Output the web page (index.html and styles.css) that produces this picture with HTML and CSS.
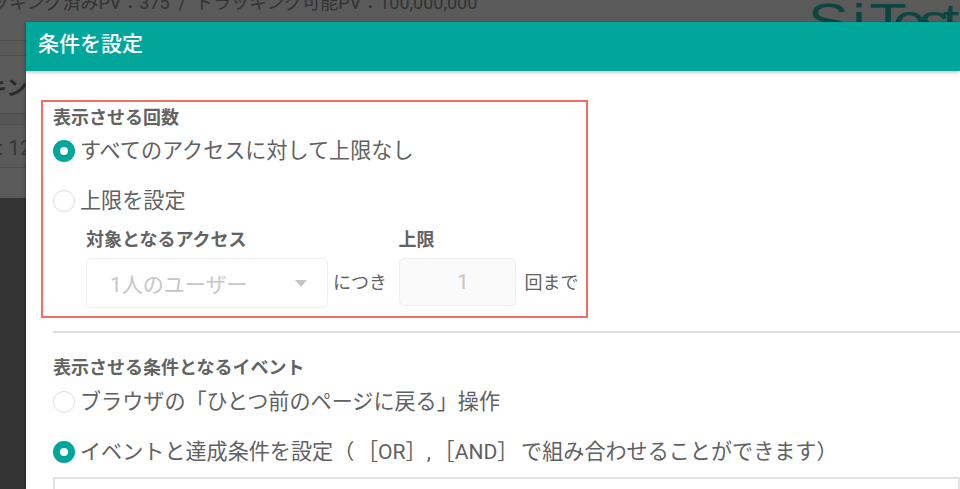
FILE: index.html
```html
<!DOCTYPE html>
<html lang="ja">
<head>
<meta charset="utf-8">
<title>条件を設定</title>
<link rel="stylesheet" href="styles.css">
</head>
<body>
<div class="backdrop">
  <div class="topbar">
    <span class="pv">ッキング済みPV：375&nbsp; /&nbsp; トラッキング可能PV：100,000,000</span>
    <span class="logo"><span class="logo-si">Si</span><span class="logo-test">Test</span></span>
  </div>
  <div class="band band-a"></div>
  <div class="band band-b"></div>
  <div class="band band-c"><span class="side-title">キン</span></div>
  <div class="band band-d"></div>
  <div class="band band-e"><span class="side-num">: 12</span></div>
  <div class="band band-f"></div>
  <div class="band band-g"></div>
</div>
<main class="modal">
  <header class="modal-head">条件を設定</header>
  <div class="modal-body">
    <section class="box">
      <h2 class="label">表示させる回数</h2>
      <div class="radio-row first"><span class="radio on"></span><span>すべてのアクセスに対して上限なし</span></div>
      <div class="radio-row second"><span class="radio"></span><span>上限を設定</span></div>
      <div class="limit-grid">
        <div class="field-col">
          <div class="sublabel">対象となるアクセス</div>
          <div class="select"><span>1人のユーザー</span><i class="caret"></i></div>
        </div>
        <span class="unit unit-a">につき</span>
        <div class="field-col">
          <div class="sublabel">上限</div>
          <div class="number">1</div>
        </div>
        <span class="unit unit-b">回まで</span>
      </div>
    </section>
    <hr class="rule">
    <h2 class="label event-label">表示させる条件となるイベント</h2>
    <div class="radio-row third"><span class="radio"></span><span>ブラウザの「ひとつ前のページに戻る」操作</span></div>
    <div class="radio-row fourth"><span class="radio on"></span><span>イベントと達成条件を設定（ ［OR］, ［AND］ で組み合わせることができます）</span></div>
    <div class="event-panel"></div>
  </div>
</main>
</body>
</html>
```
FILE: styles.css
```css
* { box-sizing: border-box; }
html, body { margin: 0; height: 489px; overflow: hidden; }
body {
  position: relative;
  background: #5a5a5a;
  font-family: Roboto, "Noto Sans CJK JP", sans-serif;
  color: #616161;
}
.backdrop { height: 489px; display: flex; flex-direction: column; }
.topbar { height: 22px; flex: none; display: flex; justify-content: space-between; overflow: hidden; }
.pv { font-size: 18px; line-height: 18px; margin-top: -6px; margin-left: -9px; color: #333; white-space: nowrap; }
.logo { width: 152px; font: 400 50px/50px "Liberation Sans", sans-serif; color: #0d4540; margin-top: -3px; transform: scaleX(1.22); transform-origin: left top; white-space: nowrap; }
.logo-si { letter-spacing: 3px; }
.logo-test { letter-spacing: -6px; }
.band { width: 26px; flex: none; white-space: nowrap; border-bottom: 1px solid #4e4e4e; }
.band-a { height: 19px; }
.band-b { height: 15px; }
.band-c { height: 58px; line-height: 64px; border-bottom: 1px solid #4a4a4a; }
.band-d { height: 11px; background: #555; }
.band-e { height: 43px; line-height: 46px; }
.band-f { height: 30px; border-bottom: 0; }
.band-g { flex: 1; background: #333; border-bottom: 0; }
.side-title { font-size: 21px; font-weight: 700; color: #2a2a2a; margin-left: -14px; }
.side-num { font-size: 21px; color: #383838; margin-left: -2px; }
.modal {
  position: absolute;
  left: 26px; top: 22px; width: 934px; height: 467px;
  background: #fff;
  box-shadow: -1px 0 2px rgba(0,0,0,.25);
  overflow: hidden;
}
.modal-head {
  height: 49px;
  background: #00a699;
  color: #fff;
  font-size: 21px;
  font-weight: 500;
  line-height: 45px;
  padding-left: 12px;
  box-shadow: 0 1px 4px rgba(0,0,0,.3);
}
.modal-body { padding: 29px 0 0 15px; }
.box { width: 547px; height: 218px; border: 2px solid #f56c62; padding: 4px 0 0 10px; }
.label { margin: 0; font-size: 18px; line-height: 24px; font-weight: 700; color: #636363; }
.radio-row { display: flex; align-items: center; gap: 5px; font-size: 21.1px; line-height: 28px; white-space: nowrap; }
.radio { width: 22px; height: 22px; border-radius: 50%; border: 1.5px solid #ddd; flex: none; background: #fff; }
.radio.on { border: 7.5px solid #00a699; }
.first { margin-top: 7px; }
.second { margin-top: 22px; }
.limit-grid { display: flex; align-items: flex-end; margin: 13px 0 0 33px; }
.sublabel { font-size: 18px; font-weight: 700; line-height: 24px; color: #636363; margin-bottom: 6px; }
.select { width: 242px; height: 50px; border: 1px solid #eee; border-radius: 5px; background: #fff; color: #c6c6c6; font-size: 21px; display: flex; align-items: center; justify-content: space-between; padding: 0 20px 0 23px; }
.caret { width: 0; height: 0; border: 6px solid transparent; border-top: 7px solid #c4c4c4; border-bottom: 0; }
.number { width: 117px; height: 48px; border: 1px solid #eee; border-radius: 5px; background: #fafafa; color: #c6c6c6; font-size: 21px; display: flex; align-items: center; justify-content: center; padding-left: 12px; margin-bottom: 2px; }
.unit { font-size: 18px; line-height: 50px; color: #616161; }
.unit-a { margin: 0 11.5px 0 5px; }
.unit-b { margin-left: 9px; }
.rule { margin: 13px 0 0 12px; border: 0; border-top: 2px solid #ddd; width: 922px; }
.event-label { margin: 23px 0 0 12px; }
.third, .fourth { margin-left: 12px; }
.third { margin-top: 8px; }
.fourth { margin-top: 22px; word-spacing: -2.5px; }
.event-panel { margin: 11px 0 0 12px; height: 60px; border: 2px solid #e2e2e2; }
```
